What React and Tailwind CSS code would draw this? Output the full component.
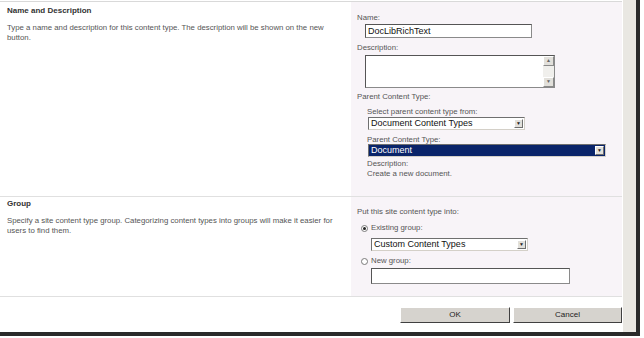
import React from "react";

const font = { fontFamily: '"Liberation Sans", Arial, sans-serif' };

function Select({ value, width, highlighted = false }) {
  return (
    <div
      className={`flex items-center h-[13px] border border-t-[#6f6f6f] border-l-[#6f6f6f] border-b-[#d4d0c8] border-r-[#d4d0c8] ${
        highlighted ? "bg-[#0a246a] text-white" : "bg-white text-[#111]"
      } ${width}`}
    >
      <span className="flex-1 pl-[2px] text-[9px] leading-[11px]">{value}</span>
      <span className="flex items-center justify-center w-[9px] h-[9px] mr-[1px] bg-[#e2e0db] border border-t-white border-l-white border-b-[#6f6f6f] border-r-[#6f6f6f] text-[#222] text-[5px] leading-none">
        ▼
      </span>
    </div>
  );
}

function Radio({ checked }) {
  return (
    <span className="flex items-center justify-center w-[7px] h-[7px] rounded-full border border-[#7a7a7a] bg-white">
      {checked && <span className="w-[3px] h-[3px] rounded-full bg-[#222]" />}
    </span>
  );
}

function Label({ children, className = "" }) {
  return <div className={`text-[7.8px] leading-[10px] text-[#555] ${className}`}>{children}</div>;
}

export default function App() {
  return (
    <div className="w-[644px] h-[338px] bg-white overflow-hidden" style={font}>
      <div className="w-[640px] h-[336px] flex border-r-[4px] border-b-[4px] border-[#2a2a2a]">
        {/* ── Form ── */}
        <div className="w-[622px] flex flex-col">
          <div className="h-[1px]" />
          <div className="h-[1px] bg-[#d9d9d9]" />

          {/* Name and Description */}
          <div className="flex h-[194px]">
            <div className="w-[351px] pl-[7px] pt-[4px]">
              <div className="text-[8px] leading-[10px] font-bold text-[#333]">Name and Description</div>
              <p className="mt-[7px] pr-[12px] text-[7.8px] leading-[10px] text-[#555]">
                Type a name and description for this content type. The description will be shown on the new button.
              </p>
            </div>
            <div className="flex-1 bg-[#f8f4f8] pl-[6px] pt-[11px]">
              <Label>Name:</Label>
              <div className="ml-[8px] mt-[1px] w-[167px] h-[14px] bg-white border border-[#8a8a8a] border-t-[#555] border-l-[#555] pl-[2px] text-[9px] leading-[12px] text-[#111]">
                DocLibRichText
              </div>
              <Label className="mt-[5px]">Description:</Label>
              <div className="ml-[8px] mt-[2px] w-[190px] h-[33px] bg-white border border-[#8a8a8a] border-t-[#555] border-l-[#555] flex justify-end">
                <div className="w-[11px] flex flex-col justify-between bg-[#f0efec]">
                  <span className="h-[10px] flex items-center justify-center bg-[#e2e0db] border border-t-white border-l-white border-b-[#8a8a8a] border-r-[#8a8a8a] text-[5px] text-[#666]">▲</span>
                  <span className="h-[10px] flex items-center justify-center bg-[#e2e0db] border border-t-white border-l-white border-b-[#8a8a8a] border-r-[#8a8a8a] text-[5px] text-[#666]">▼</span>
                </div>
              </div>
              <Label className="mt-[4px]">Parent Content Type:</Label>
              <div className="pl-[10px]">
                <Label className="mt-[5px]">Select parent content type from:</Label>
                <div className="ml-[1px]">
                  <Select value="Document Content Types" width="w-[157px]" />
                </div>
                <Label className="mt-[5px]">Parent Content Type:</Label>
                <div className="ml-[1px] mt-[-1px]">
                  <Select value="Document" width="w-[238px]" highlighted />
                </div>
                <Label className="mt-[2px]">Description:</Label>
                <Label>Create a new document.</Label>
              </div>
            </div>
          </div>

          <div className="h-[1px] bg-[#e0e0e0]" />

          {/* Group */}
          <div className="flex h-[99px]">
            <div className="w-[351px] pl-[7px] pt-[2px]">
              <div className="text-[8px] leading-[10px] font-bold text-[#333]">Group</div>
              <p className="mt-[7px] pr-[10px] text-[7.8px] leading-[10px] text-[#555]">
                Specify a site content type group. Categorizing content types into groups will make it easier for users to find them.
              </p>
            </div>
            <div className="flex-1 bg-[#f8f4f8] pl-[6px] pt-[10px]">
              <Label>Put this site content type into:</Label>
              <div className="flex items-center gap-[3px] ml-[4px] mt-[6px]">
                <Radio checked />
                <Label>Existing group:</Label>
              </div>
              <div className="ml-[14px] mt-[5px]">
                <Select value="Custom Content Types" width="w-[157px]" />
              </div>
              <div className="flex items-center gap-[3px] ml-[4px] mt-[5px]">
                <Radio />
                <Label>New group:</Label>
              </div>
              <div className="ml-[14px] mt-[2px] w-[199px] h-[16px] bg-white border border-[#8a8a8a] border-t-[#555] border-l-[#555]" />
            </div>
          </div>

          <div className="h-[1px] bg-[#e0e0e0]" />

          {/* Buttons */}
          <div className="flex justify-end gap-[3px] pt-[10px]">
            <button className="w-[110px] h-[16px] bg-[#d6d3ce] border border-t-white border-l-white border-b-[#404040] border-r-[#404040] text-[8px] text-[#222]">
              OK
            </button>
            <button className="w-[109px] h-[16px] bg-[#d6d3ce] border border-t-white border-l-white border-b-[#404040] border-r-[#404040] text-[8px] text-[#222]">
              Cancel
            </button>
          </div>
        </div>

        {/* ── Side strip ── */}
        <div className="flex-1 bg-[#e9e7e2] border-l border-white" />
      </div>
    </div>
  );
}
